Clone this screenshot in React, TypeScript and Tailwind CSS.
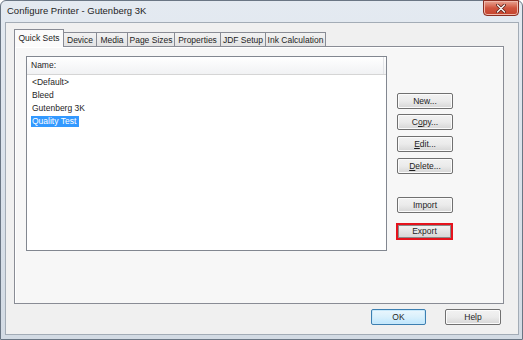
import React from "react";

const font = { fontFamily: '"Liberation Sans", Arial, sans-serif' };

const tabs = [
  { label: "Quick Sets", w: "w-[50px]", active: true },
  { label: "Device", w: "w-[34px]" },
  { label: "Media", w: "w-[32px]" },
  { label: "Page Sizes", w: "w-[48px]" },
  { label: "Properties", w: "w-[47px]" },
  { label: "JDF Setup", w: "w-[46px]" },
  { label: "Ink Calculation", w: "w-[61px]" },
];

const items = ["<Default>", "Bleed", "Gutenberg 3K", "Quality Test"];

function WinButton({ children, className = "" }: { children: React.ReactNode; className?: string }) {
  return (
    <div
      className={`flex h-[16px] w-[56px] items-center justify-center rounded-[2px] border border-[#707070] bg-gradient-to-b from-[#f2f2f2] via-[#ebebeb] to-[#d6d6d6] text-[8.5px] text-[#1e1e1e] shadow-[inset_0_0_0_1px_#fbfbfb] ${className}`}
    >
      {children}
    </div>
  );
}

export default function App() {
  return (
    <div style={font} className="h-[340px] w-[523px] overflow-hidden bg-white text-[#1e1e1e]">
      <div className="flex h-[340px] w-[523px] flex-col rounded-t-[6px] border border-[#6a7684] bg-gradient-to-b from-[#e4eaf1] via-[#dae2eb] to-[#d3dbe4]">
        {/* title bar */}
        <div className="flex h-[21px] shrink-0 items-start">
          <div className="pl-[6px] pt-[5px] text-[9.5px] leading-none">Configure Printer - Gutenberg 3K</div>
          <div className="ml-auto mr-[3px] -mt-px flex h-[16px] w-[36px] items-center justify-center rounded-b-[4px] border border-[#8a2e22] bg-gradient-to-b from-[#e8a493] via-[#d0553f] to-[#c4432c] shadow-[inset_0_0_0_1px_#f0b8aa]">
            <svg width="10" height="9" viewBox="0 0 10 9">
              <path d="M1.5 1 L8.5 8 M8.5 1 L1.5 8" stroke="#5a1a12" strokeWidth="3" strokeLinecap="round" />
              <path d="M1.5 1 L8.5 8 M8.5 1 L1.5 8" stroke="#f4f0ee" strokeWidth="1.6" strokeLinecap="round" />
            </svg>
          </div>
        </div>

        {/* client area */}
        <div className="mb-[4px] ml-[4px] mr-[3px] flex flex-1 flex-col border border-[#a3acb6] bg-[#f0f0f0]">
          {/* tab strip */}
          <div className="ml-[8px] mt-[6px] flex h-[17px] items-end">
            {tabs.map((t) =>
              t.active ? (
                <div
                  key={t.label}
                  className={`relative z-10 -mb-px flex h-[18px] ${t.w} items-start justify-center border border-b-0 border-[#898c95] bg-[#fbfbfb] pt-[4px] text-[8.5px] leading-none`}
                >
                  {t.label}
                </div>
              ) : (
                <div
                  key={t.label}
                  className={`-ml-px flex h-[14px] ${t.w} items-center justify-center border border-b-0 border-[#898c95] bg-gradient-to-b from-[#f2f2f2] to-[#e3e3e3] pt-px text-[8.5px] leading-none first:ml-0`}
                >
                  {t.label}
                </div>
              )
            )}
          </div>

          {/* tab panel */}
          <div className="ml-[8px] flex h-[258px] w-[490px] border border-[#898c95] bg-[#f7f7f7] pl-[11px] pt-[9px] shadow-[inset_1px_1px_0_#ffffff]">
            {/* list box */}
            <div className="flex h-[195px] w-[361px] flex-col border border-[#828790] bg-white">
              <div className="flex h-[18px] items-center border-b border-[#d5d5d5] bg-gradient-to-b from-white to-[#f1f2f4]">
                <div className="flex h-full w-[357px] items-center border-r border-[#e3e5e8] pl-[4px] text-[8.5px]">Name:</div>
              </div>
              <div className="flex flex-col pl-[4px] pt-[1px]">
                {items.map((it, i) => (
                  <div key={it} className="flex h-[13px] items-center">
                    <span
                      className={`px-[1px] text-[8.5px] leading-[11px] ${
                        i === 3 ? "bg-[#3399ff] pr-[3px] text-white" : ""
                      }`}
                    >
                      {it}
                    </span>
                  </div>
                ))}
              </div>
            </div>

            {/* buttons column */}
            <div className="ml-[10px] flex flex-col pt-[37px]">
              <WinButton>New...</WinButton>
              <WinButton className="mt-[5px]">
                <span>
                  C<span className="underline">o</span>py...
                </span>
              </WinButton>
              <WinButton className="mt-[6px]">
                <span>
                  <span className="underline">E</span>dit...
                </span>
              </WinButton>
              <WinButton className="mt-[6px]">
                <span>
                  <span className="underline">D</span>elete...
                </span>
              </WinButton>
              <WinButton className="mt-[23px]">Import</WinButton>
              <div className="mt-[10px] -ml-px h-[17px] w-[57px] border-2 border-[#e5131d]">
                <div className="flex h-full w-full items-center justify-center border border-[#8a8a8a] bg-gradient-to-b from-[#f2f2f2] to-[#d8d8d8] text-[8.5px]">
                  Export
                </div>
              </div>
            </div>
          </div>

          {/* bottom buttons */}
          <div className="mt-[5px] flex justify-end gap-[19px] pr-[17px]">
            <div className="flex h-[16px] w-[55px] items-center justify-center rounded-[2px] border border-[#3c7fb1] bg-gradient-to-b from-[#eaf6fd] via-[#d9f0fc] to-[#bee6fd] text-[8.5px] shadow-[inset_0_0_0_1px_#c8e8fa]">
              OK
            </div>
            <WinButton className="w-[56px]">Help</WinButton>
          </div>
        </div>
      </div>
    </div>
  );
}
